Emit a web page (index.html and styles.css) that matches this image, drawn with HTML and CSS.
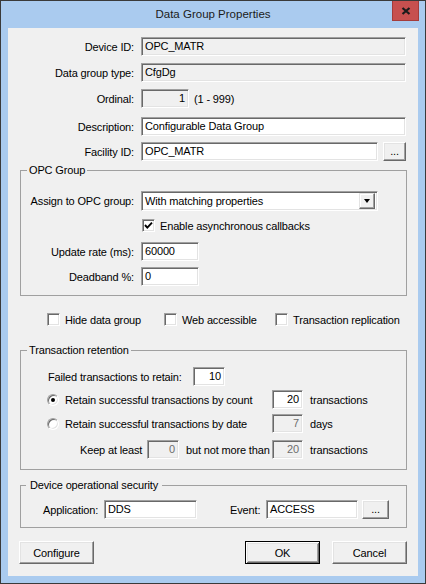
FILE: index.html
```html
<!DOCTYPE html>
<html>
<head>
<meta charset="utf-8">
<title>Data Group Properties</title>
<link rel="stylesheet" href="styles.css">
</head>
<body>
<div class="window">
  <div class="titlebar">
    <div class="title">Data Group Properties</div>
    <div class="close">
      <svg width="10" height="8" viewBox="0 0 10 8"><path d="M1.5 1 L8.5 7 M8.5 1 L1.5 7" stroke="#1b1b1b" stroke-width="2.2" fill="none"/></svg>
    </div>
  </div>
  <div class="client">
    <div class="top">
      <div class="row"><span class="lbl">Device ID:</span><div class="edit ro grow">OPC_MATR</div></div>
      <div class="row"><span class="lbl">Data group type:</span><div class="edit ro grow">CfgDg</div></div>
      <div class="row"><span class="lbl">Ordinal:</span><div class="edit ro num w48">1</div><span class="hint">(1 - 999)</span></div>
      <div class="row desc"><span class="lbl">Description:</span><div class="edit grow">Configurable Data Group</div></div>
      <div class="row fac"><span class="lbl">Facility ID:</span><div class="edit grow">OPC_MATR</div><div class="btn dots">...</div></div>
    </div>

    <fieldset class="group opc">
      <legend>OPC Group</legend>
      <div class="row combo-row"><span class="lbl">Assign to OPC group:</span>
        <div class="combo"><span class="combo-text">With matching properties</span><span class="drop"><span class="tri"></span></span></div>
      </div>
      <div class="row check-row">
        <span class="lbl"></span>
        <span class="cb checked"><svg width="9" height="9" viewBox="0 0 9 9"><path d="M1 4 L3.3 6.6 L8 1.6" stroke="#000" stroke-width="1.9" fill="none"/></svg></span>
        <span class="cb-text">Enable asynchronous callbacks</span>
      </div>
      <div class="row upd"><span class="lbl">Update rate (ms):</span><div class="edit w58">60000</div></div>
      <div class="row dead"><span class="lbl">Deadband %:</span><div class="edit w58">0</div></div>
    </fieldset>

    <div class="checks">
      <div class="citem"><span class="cb"></span><span class="cb-text">Hide data group</span></div>
      <div class="citem"><span class="cb"></span><span class="cb-text">Web accessible</span></div>
      <div class="citem"><span class="cb"></span><span class="cb-text">Transaction replication</span></div>
    </div>

    <fieldset class="group ret">
      <legend>Transaction retention</legend>
      <div class="row failed"><span class="flbl">Failed transactions to retain:</span><div class="edit num w32">10</div></div>
      <div class="rrow r1">
        <div class="ra"><span class="radio on"><span class="dot"></span></span><span class="rtext">Retain successful transactions by count</span></div>
        <div class="edit num">20</div>
        <span class="unit">transactions</span>
      </div>
      <div class="rrow r2">
        <div class="ra"><span class="radio"></span><span class="rtext">Retain successful transactions by date</span></div>
        <div class="edit num dis">7</div>
        <span class="unit">days</span>
      </div>
      <div class="rrow r3">
        <div class="ra keep"><span class="kl">Keep at least</span><div class="edit num dis w32">0</div><span class="bn">but not more than</span></div>
        <div class="edit num dis">20</div>
        <span class="unit">transactions</span>
      </div>
    </fieldset>

    <fieldset class="group sec">
      <legend>Device operational security</legend>
      <div class="row secrow">
        <span class="alabel">Application:</span><div class="edit w93">DDS</div>
        <span class="elabel">Event:</span><div class="edit w92">ACCESS</div>
        <div class="btn dots2">...</div>
      </div>
    </fieldset>

    <div class="buttons">
      <div class="btn push">Configure</div>
      <div class="spacer"></div>
      <div class="btn push def">OK</div>
      <div class="btn push cancel">Cancel</div>
    </div>
  </div>
</div>
</body>
</html>
```

FILE: styles.css
```css
* { box-sizing: border-box; }
html, body { margin: 0; padding: 0; }
body {
  font-family: "Liberation Sans", Arial, sans-serif;
  font-size: 11px;
  letter-spacing: -0.15px;
  color: #000;
  background: #aacbef;
}
.window {
  width: 426px;
  height: 584px;
  border: 1px solid #3a3a3a;
  background: #aacbef;
  display: flex;
  flex-direction: column;
}
.titlebar {
  height: 27px;
  display: grid;
  grid-template-columns: 1fr auto 1fr;
  align-items: start;
}
.title {
  grid-column: 2;
  font-size: 11.5px;
  letter-spacing: 0;
  line-height: 27px;
  color: #1b1b1b;
}
.close {
  grid-column: 3;
  justify-self: end;
  width: 27px;
  height: 20px;
  margin-right: 6px;
  background: #c7504f;
  border: 1px solid #a43c3b;
  border-top: none;
  display: flex;
  align-items: center;
  justify-content: center;
}
.client {
  margin: 0 7px 7px;
  flex: 1;
  background: #f0f0f0;
  display: flex;
  flex-direction: column;
}

/* generic rows */
.row { display: flex; align-items: center; height: 19px; }
.lbl { flex: none; text-align: right; padding-right: 7px; white-space: nowrap; }
.top { padding: 9px 12px 0 0; }
.top .lbl { width: 133px; }
.top .row + .row { margin-top: 7px; }
.top .row.desc { margin-top: 9px; }
.top .row.fac { margin-top: 6px; }

/* edit boxes */
.edit {
  height: 19px;
  border: 1px solid;
  border-color: #a0a0a0 #ffffff #ffffff #a0a0a0;
  box-shadow: inset 1px 1px 0 #696969, inset -1px -1px 0 #e3e3e3;
  background: #fff;
  padding: 0 2px 0 3px;
  line-height: 17px;
  white-space: nowrap;
  overflow: hidden;
  flex: none;
}
.edit.grow { flex: 1; }
.edit.ro { background: #f0f0f0; }
.edit.dis { background: #f0f0f0; color: #6d6d6d; }
.edit.num { text-align: right; padding-right: 3px; }
.w48 { width: 48px; }
.w58 { width: 58px; }
.w32 { width: 32px; }
.w93 { width: 93px; }
.w92 { width: 92px; }
.hint { margin-left: 5px; }

/* buttons */
.btn {
  background: #f0f0f0;
  border: 1px solid;
  border-color: #ffffff #696969 #696969 #ffffff;
  box-shadow: inset -1px -1px 0 #a0a0a0, inset 1px 1px 0 #e3e3e3;
  display: flex;
  align-items: center;
  justify-content: center;
  flex: none;
}
.dots { width: 23px; height: 19px; margin-left: 5px; padding-bottom: 2px; }
.dots2 { width: 27px; height: 19px; margin-left: 4px; padding-bottom: 2px; }

/* group boxes */
.group {
  border: 1px solid #a0a0a0;
  margin: 0 11px 0 12px;
  padding: 0;
  min-width: 0;
}
.group legend {
  padding: 0 2px;
  margin-left: 6px;
  line-height: 13px;
  height: 13px;
}
.opc { margin-top: 3px; padding: 14px 0 9px; }
.opc .lbl { width: 120px; }
.combo {
  width: 237px;
  height: 20px;
  border: 1px solid;
  border-color: #a0a0a0 #ffffff #ffffff #a0a0a0;
  box-shadow: inset 1px 1px 0 #696969, inset -1px -1px 0 #e3e3e3;
  background: #fff;
  display: flex;
  align-items: center;
  padding: 1px 2px 1px 1px;
}
.combo-text { flex: 1; padding-left: 2px; white-space: nowrap; }
.drop {
  width: 16px;
  height: 16px;
  background: #f0f0f0;
  border: 1px solid;
  border-color: #e3e3e3 #696969 #696969 #e3e3e3;
  box-shadow: inset -1px -1px 0 #a0a0a0, inset 1px 1px 0 #fff;
  display: flex;
  align-items: center;
  justify-content: center;
}
.tri {
  width: 0; height: 0;
  border-left: 3.5px solid transparent;
  border-right: 3.5px solid transparent;
  border-top: 4px solid #000;
  margin-top: 1px;
}
.check-row { height: 13px; margin-top: 9px; }
.check-row .cb { margin-left: 1px; }
.upd { margin-top: 10px; }
.dead { margin-top: 6px; }

/* checkbox */
.cb {
  width: 13px;
  height: 13px;
  flex: none;
  border: 1px solid;
  border-color: #a0a0a0 #ffffff #ffffff #a0a0a0;
  box-shadow: inset 1px 1px 0 #696969, inset -1px -1px 0 #e3e3e3;
  background: #fff;
  display: flex;
  align-items: center;
  justify-content: center;
}
.cb-text { margin-left: 5px; white-space: nowrap; }

.checks {
  margin-top: 17px;
  height: 13px;
  display: grid;
  grid-template-columns: 117px 111px auto;
  padding-left: 39px;
}
.citem { display: flex; align-items: center; height: 13px; }

/* retention */
.ret { margin-top: 18px; padding: 10px 0 10px; }
.failed { padding-left: 27px; }
.flbl { width: 145px; white-space: nowrap; }
.rrow {
  display: grid;
  grid-template-columns: 251px 31px auto;
  align-items: center;
  height: 19px;
}
.r1 { margin-top: 4px; }
.r2 { margin-top: 5px; }
.r3 { margin-top: 7px; }
.ra { display: flex; align-items: center; padding-left: 26px; white-space: nowrap; }
.ra.keep { padding-left: 59px; }
.kl { width: 67px; }
.bn { margin-left: 7px; }
.rtext { margin-left: 6px; }
.unit { padding-left: 7px; white-space: nowrap; }
.radio {
  width: 12px;
  height: 12px;
  border-radius: 50%;
  flex: none;
  border: 1px solid;
  border-color: #a0a0a0 #ffffff #ffffff #a0a0a0;
  box-shadow: inset 1px 1px 0 #696969, inset -1px -1px 0 #e3e3e3;
  background: #fff;
  display: flex;
  align-items: center;
  justify-content: center;
}
.dot { width: 4px; height: 4px; border-radius: 50%; background: #000; }

/* security */
.sec { margin-top: 9px; padding: 8px 0 8px; }
.sec legend { padding: 0 4px; margin-left: 5px; }
.secrow { padding-left: 22px; }
.alabel { width: 61px; white-space: nowrap; }
.elabel { width: 36px; margin-left: 33px; white-space: nowrap; }

/* bottom buttons */
.buttons {
  margin-top: 13px;
  display: flex;
  padding: 0 11px;
}
.spacer { flex: 1; }
.push { width: 75px; height: 23px; }
.cancel { margin-left: 12px; }
.def {
  border: 1px solid #000;
  box-shadow: inset 1px 1px 0 #fff, inset -1px -1px 0 #696969, inset 2px 2px 0 #e3e3e3, inset -2px -2px 0 #a0a0a0;
}
```
